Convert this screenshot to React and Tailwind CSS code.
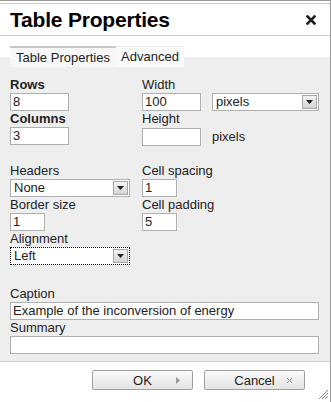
import React from 'react';

const Label = ({ children, bold }) => (
  <div className={`h-[16px] leading-[16px] text-[13px] text-[#222] ${bold ? 'font-bold' : ''}`}>
    {children}
  </div>
);

const TextBox = ({ value = '', width }) => (
  <input
    type="text"
    defaultValue={value}
    className={`${width} h-[18px] border border-[#b0b0b0] bg-white px-[2px] text-[13px] text-[#222] outline-none`}
  />
);

const SelectBox = ({ value, width, focused }) => (
  <div
    className={`${width} h-[18px] flex items-center justify-between bg-white text-[13px] text-[#222] ${
      focused ? 'border border-dotted border-black' : 'border border-[#b0b0b0]'
    }`}
  >
    <span className="pl-[3px]">{value}</span>
    <span className="w-[15px] h-[14px] mr-[1px] flex items-center justify-center bg-gradient-to-b from-[#f4f4f4] to-[#d4d4d4] border border-[#a8a8a8]">
      <svg width="7" height="4" viewBox="0 0 7 4">
        <path d="M0 0h7L3.5 4z" fill="#222" />
      </svg>
    </span>
  </div>
);

const App = () => {
  return (
    <div
      className="w-[331px] h-[402px] bg-white border-t border-r border-[#9a9a9a] flex flex-col overflow-hidden"
      style={{ fontFamily: '"Liberation Sans", Arial, sans-serif' }}
    >
      <div className="mt-[2px] h-[33px] border-t border-b border-[#c8c8c8] flex items-center justify-between pl-[10px] pr-[14px]">
        <h1 className="text-[21px] font-bold text-black tracking-[-0.2px]">Table Properties</h1>
        <svg width="10" height="10" viewBox="0 0 10 10">
          <path d="M1.5 1.5l7 7M8.5 1.5l-7 7" stroke="#222" strokeWidth="2.6" strokeLinecap="square" />
        </svg>
      </div>

      <div className="relative mt-[10px] h-[11px]">
        <div className="absolute left-[10px] top-0 flex z-10">
          <div className="h-[21px] w-[106px] border-t-2 border-[#c8c8c8] bg-[#f8f8f8] flex items-center justify-center text-[13px] text-[#222]">
            Table Properties
          </div>
          <div className="h-[21px] w-[68px] border-t border-[#ececec] bg-[#fafafa] flex items-center justify-center text-[13px] text-[#222]">
            Advanced
          </div>
        </div>
      </div>

      <div className="bg-[#eeeeee] h-[305px] border-b border-[#d0d0d0] px-[10px] pt-[20px]">
        <div className="grid grid-cols-[132px_1fr]">
          <div className="flex flex-col">
            <Label bold>Rows</Label>
            <TextBox value="8" width="w-[59px]" />
            <Label bold>Columns</Label>
            <TextBox value="3" width="w-[59px]" />
          </div>
          <div className="flex flex-col">
            <Label>Width</Label>
            <div className="flex items-center gap-[11px]">
              <TextBox value="100" width="w-[59px]" />
              <SelectBox value="pixels" width="w-[107px]" />
            </div>
            <Label>Height</Label>
            <div className="flex items-center gap-[11px]">
              <TextBox width="w-[59px]" />
              <span className="text-[13px] text-[#222]">pixels</span>
            </div>
          </div>
        </div>

        <div className="grid grid-cols-[132px_1fr] mt-[16px]">
          <div className="flex flex-col">
            <Label>Headers</Label>
            <SelectBox value="None" width="w-[120px]" />
            <Label>Border size</Label>
            <TextBox value="1" width="w-[35px]" />
            <Label>Alignment</Label>
            <SelectBox value="Left" width="w-[120px]" focused />
          </div>
          <div className="flex flex-col">
            <Label>Cell spacing</Label>
            <TextBox value="1" width="w-[35px]" />
            <Label>Cell padding</Label>
            <TextBox value="5" width="w-[35px]" />
          </div>
        </div>

        <div className="mt-[21px] flex flex-col">
          <Label>Caption</Label>
          <TextBox value="Example of the inconversion of energy" width="w-[309px]" />
          <Label>Summary</Label>
          <TextBox width="w-[309px]" />
        </div>
      </div>

      <div className="relative flex-1">
        <div className="flex gap-[11px] pl-[92px] pt-[8px]">
          <button className="relative w-[101px] h-[20px] rounded-[2px] border border-[#a0a0a0] bg-gradient-to-b from-[#fafafa] to-[#e4e4e4] text-[13px] text-[#222]">
            OK
            <svg className="absolute right-[12px] top-[6px]" width="4" height="7" viewBox="0 0 4 7">
              <path d="M0 0l4 3.5L0 7z" fill="#999" />
            </svg>
          </button>
          <button className="relative w-[101px] h-[20px] rounded-[2px] border border-[#a0a0a0] bg-gradient-to-b from-[#fafafa] to-[#e4e4e4] text-[13px] text-[#222]">
            Cancel
            <svg className="absolute right-[11px] top-[6px]" width="7" height="7" viewBox="0 0 7 7">
              <path d="M1 1l5 5M6 1l-5 5" stroke="#999" strokeWidth="1" />
            </svg>
          </button>
        </div>
        <svg className="absolute right-[1px] bottom-[2px]" width="12" height="12" viewBox="0 0 12 12">
          <path d="M11 2L2 11M11 5L5 11M11 8L8 11" stroke="#888" strokeWidth="1" />
        </svg>
      </div>
    </div>
  );
};

export default App;
